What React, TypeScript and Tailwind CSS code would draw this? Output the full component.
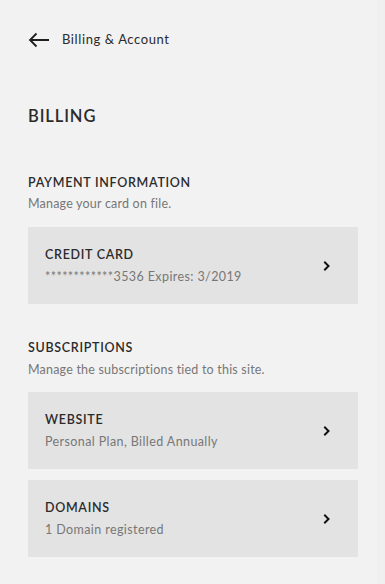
import React from "react";

const font = { fontFamily: "Lato, 'Noto Sans', sans-serif" };

function Chevron() {
  return (
    <svg width="8" height="10" viewBox="0 0 8 10" className="shrink-0">
      <path d="M2 1.5 L5.5 5 L2 8.5" fill="none" stroke="#111" strokeWidth="2" strokeLinecap="square" />
    </svg>
  );
}

function Card({ title, sub }: { title: string; sub: string }) {
  return (
    <div className="h-[77px] bg-[#e3e3e3] flex items-center pl-[17px] pr-[27px]">
      <div className="flex-1 flex flex-col">
        <div className="text-[12.5px] leading-[16px] tracking-[0.7px] text-[#2b2b2b] font-semibold">{title}</div>
        <div className="text-[12.5px] leading-[16px] mt-[6px] tracking-[0.4px] text-[#777777]">{sub}</div>
      </div>
      <Chevron />
    </div>
  );
}

export default function App() {
  return (
    <div className="w-[385px] h-[584px] bg-[#f2f2f2] flex" style={font}>
      <div className="w-[377px] pl-[28px] pr-[19px] flex flex-col">
        <div className="h-[80px] flex items-center gap-[12px]">
          <svg width="22" height="16" viewBox="0 0 22 16">
            <path d="M21 8 H2 M8.5 1.5 L2 8 L8.5 14.5" fill="none" stroke="#1e1e1e" strokeWidth="1.8" />
          </svg>
          <span className="text-[13px] text-[#2b2b2b] tracking-[0.6px]">Billing &amp; Account</span>
        </div>
        <div className="mt-[26px] text-[16.5px] leading-[20px] tracking-[0.9px] text-[#2b2b2b] font-semibold">BILLING</div>

        <div className="mt-[49px] text-[12.5px] leading-[16px] tracking-[0.7px] text-[#2b2b2b] font-semibold">PAYMENT INFORMATION</div>
        <div className="mt-[5px] text-[12.5px] leading-[16px] tracking-[0.2px] text-[#777777]">Manage your card on file.</div>
        <div className="mt-[15px]">
          <Card title="CREDIT CARD" sub="************3536 Expires: 3/2019" />
        </div>

        <div className="mt-[36px] text-[12.5px] leading-[16px] tracking-[0.7px] text-[#2b2b2b] font-semibold">SUBSCRIPTIONS</div>
        <div className="mt-[6px] text-[12.5px] leading-[16px] tracking-[0.2px] text-[#777777]">Manage the subscriptions tied to this site.</div>
        <div className="mt-[14px] flex flex-col gap-[11px]">
          <Card title="WEBSITE" sub="Personal Plan, Billed Annually" />
          <Card title="DOMAINS" sub="1 Domain registered" />
        </div>
      </div>
      <div className="flex-1 bg-[#efefef]" />
    </div>
  );
}
